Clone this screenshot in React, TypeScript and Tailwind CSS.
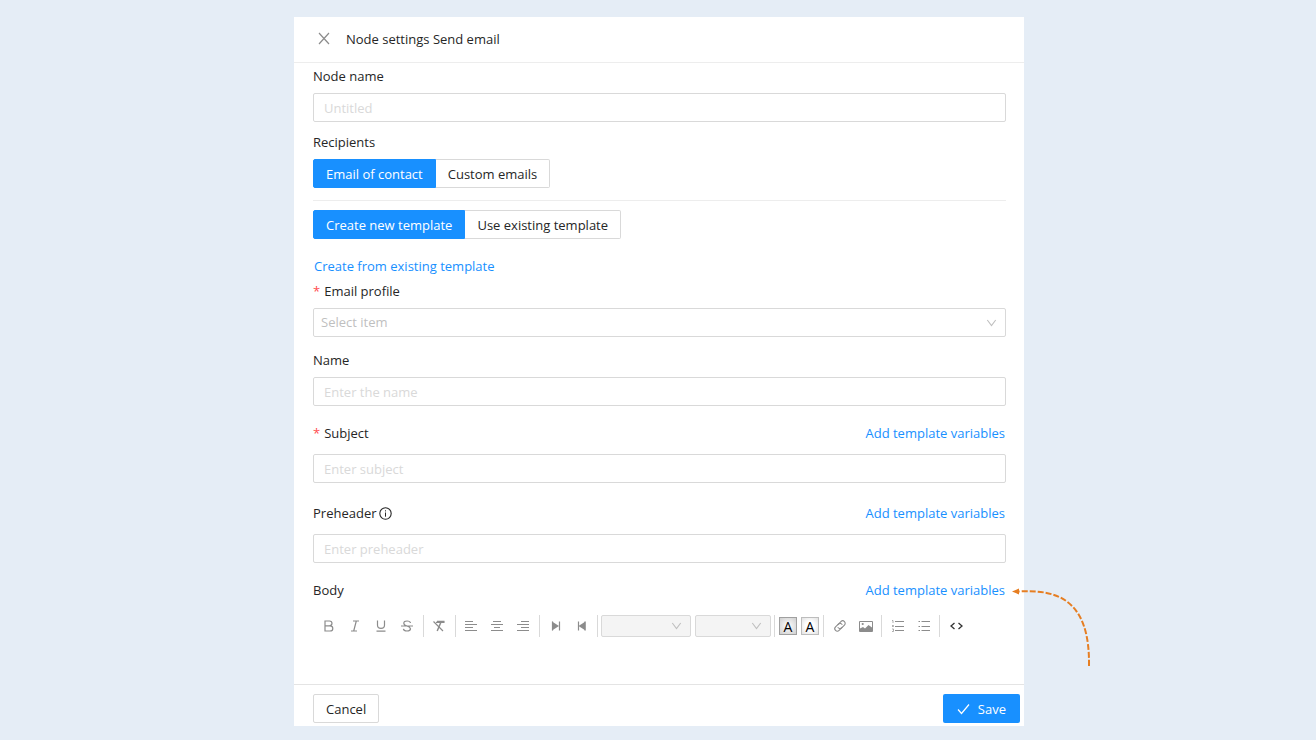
import { useState, type ReactNode } from "react";

function Separator() {
  return <span className="ml-[3px] mr-0.5 h-[22px] w-px bg-[#d9d9d9]" />;
}

function ToolButton({ label, dark, children }: { label: string; dark?: boolean; children: ReactNode }) {
  return (
    <button
      type="button"
      aria-label={label}
      className={`flex h-[22px] w-[26px] items-center justify-center ${dark ? "text-[#333333]" : "text-[#8c8c8c]"}`}
    >
      <svg width="16" height="16" viewBox="0 0 16 16" fill="none" stroke="currentColor" strokeWidth="1.2">
        {children}
      </svg>
    </button>
  );
}

function Chevron() {
  return (
    <svg
      className="pointer-events-none absolute right-[9px] top-1/2 -translate-y-1/2 text-[#bfbfbf]"
      width="11"
      height="10"
      viewBox="0 0 11 10"
      fill="none"
      stroke="currentColor"
      strokeWidth="1.1"
    >
      <path d="M1.3 2L5.5 7.5L9.7 2" />
    </svg>
  );
}

function ColorButton({ label, active }: { label: string; active?: boolean }) {
  return (
    <button
      type="button"
      aria-label={label}
      className={`flex h-[18px] w-[18px] items-center justify-center border pt-0.5 text-sm font-medium leading-none text-black ${
        active
          ? "border-[#a0a0a0] bg-[radial-gradient(circle,#ffffff,#cfcfcf)]"
          : "border-[#bdbdbd] bg-[radial-gradient(circle,#ffffff_40%,#e2e2e2)]"
      }`}
    >
      A
    </button>
  );
}

function Segmented({ name, options }: { name: string; options: string[] }) {
  const [value, setValue] = useState(options[0]);
  return (
    <div role="radiogroup" aria-label={name} className="flex">
      {options.map((option) => (
        <label
          key={option}
          className={`flex h-[29px] cursor-pointer items-center border px-3 pt-px first:rounded-l-xs last:rounded-r-xs ${
            value === option
              ? "border-[#1890ff] bg-[#1890ff] text-white"
              : "border-[#d9d9d9] bg-white first:border-r-0 last:border-l-0"
          }`}
        >
          <input
            type="radio"
            name={name}
            className="sr-only"
            checked={value === option}
            onChange={() => setValue(option)}
          />
          {option}
        </label>
      ))}
    </div>
  );
}

function TextField({ id, placeholder }: { id: string; placeholder: string }) {
  return (
    <input
      id={id}
      type="text"
      placeholder={placeholder}
      className="block h-[29px] w-full rounded-xs border border-[#d9d9d9] px-2.5 outline-none placeholder:text-[#d9d9d9] focus:border-[#1890ff]"
    />
  );
}

function VariablesLink() {
  return (
    <a href="#variables" className="pr-px text-[#1890ff]">
      Add template variables
    </a>
  );
}

function Required() {
  return <span className="mr-1 text-[#ff4d4f]">*</span>;
}

export default function App() {
  return (
    <div className="min-h-screen bg-[#e5edf6] py-[17px] pl-0.5 font-['Open_Sans',sans-serif] text-[13px] leading-5 text-[#262626]">
      <div className="relative mx-auto max-w-[730px] bg-white">
        <header className="flex h-[46px] items-center border-b border-[#ededed] pb-0.5 pl-6">
          <button type="button" aria-label="Close" className="mr-4 text-[#8c8c8c]">
            <svg width="12" height="14" viewBox="0 0 12 14" fill="none" stroke="currentColor" strokeWidth="1.2">
              <path d="M1 1L11 12M11 1L1 12" />
            </svg>
          </button>
          <h1>Node settings Send email</h1>
        </header>

        <main className="pl-[19px] pr-[18px] pt-[3px]">
          <label htmlFor="node" className="mb-[7px] block">
            Node name
          </label>
          <TextField id="node" placeholder="Untitled" />

          <p className="mb-[7px] mt-2.5">Recipients</p>
          <Segmented name="Recipients" options={["Email of contact", "Custom emails"]} />

          <hr className="mb-[9px] mt-3 border-[#ededed]" />
          <Segmented name="Template" options={["Create new template", "Use existing template"]} />

          <a href="#existing" className="mt-[17px] block pl-px text-[#1890ff]">
            Create from existing template
          </a>

          <label htmlFor="profile" className="mb-[7px] mt-[5px] block">
            <Required />
            Email profile
          </label>
          <div className="relative">
            <select
              id="profile"
              className="block h-[29px] w-full appearance-none rounded-xs border border-[#d9d9d9] bg-white px-[7px] pb-0.5 text-[#bfbfbf] outline-none"
            >
              <option>Select item</option>
            </select>
            <Chevron />
          </div>

          <label htmlFor="name" className="mb-[7px] mt-[13px] block">
            Name
          </label>
          <TextField id="name" placeholder="Enter the name" />

          <div className="mb-[11px] mt-[17px] flex justify-between">
            <label htmlFor="subject">
              <Required />
              Subject
            </label>
            <VariablesLink />
          </div>
          <TextField id="subject" placeholder="Enter subject" />

          <div className="mb-[11px] mt-5 flex justify-between">
            <label htmlFor="preheader" className="flex items-center gap-0.5">
              Preheader
              <svg width="13" height="13" viewBox="0 0 13 13" fill="none" stroke="currentColor">
                <circle cx="6.5" cy="6.5" r="5.7" strokeWidth="1.1" />
                <path d="M6.5 5.5V9.7M6.5 3.3V4.4" />
              </svg>
            </label>
            <VariablesLink />
          </div>
          <TextField id="preheader" placeholder="Enter preheader" />

          <div className="mb-[15px] mt-[17px] flex justify-between">
            <label htmlFor="body">Body</label>
            <VariablesLink />
          </div>

          <div className="flex flex-wrap items-center pl-[3px]">
            <ToolButton label="Bold">
              <path d="M4 3H8.5Q11 3 11 5.3T8.5 7.8H4ZM4 7.8H9Q11.8 7.8 11.8 10.4T9 13H4Z" />
            </ToolButton>
            <ToolButton label="Italic">
              <path d="M6 3H12M4 13H10M9.3 3L6.7 13" />
            </ToolButton>
            <ToolButton label="Underline">
              <path d="M4.5 2.5V7.2Q4.5 10.3 8 10.3T11.5 7.2V2.5M3.5 13.2H12.5" />
            </ToolButton>
            <ToolButton label="Strikethrough">
              <path d="M11.5 5Q11.2 3 8 3T4.8 5.2Q4.8 7 8 8T11.5 10.8Q11.2 13 8 13T4.4 10.8M2 8H14" />
            </ToolButton>
            <Separator />
            <ToolButton label="Clear formatting">
              <path d="M2.5 3.5L12 13M5 4.4H13.5" />
              <path d="M6 3.5H13.5M9.8 4.5L6.2 13" strokeWidth="1.5" />
            </ToolButton>
            <Separator />
            <ToolButton label="Align left">
              <path d="M2 3.5H10M2 6.5H14M2 9.5H10M2 12.5H14" strokeWidth="1" />
            </ToolButton>
            <ToolButton label="Align center">
              <path d="M4 3.5H12M2 6.5H14M5 9.5H11M2 12.5H14" strokeWidth="1" />
            </ToolButton>
            <ToolButton label="Align right">
              <path d="M6 3.5H14M2 6.5H14M6 9.5H14M2 12.5H14" strokeWidth="1" />
            </ToolButton>
            <Separator />
            <ToolButton label="Left to right">
              <path d="M5 3.5L12 8L5 12.5Z" fill="currentColor" stroke="none" />
              <path d="M5.5 3.5V12.5M12.5 3.5V12.5" />
            </ToolButton>
            <ToolButton label="Right to left">
              <path d="M12.5 3.5L5.5 8L12.5 12.5Z" fill="currentColor" stroke="none" />
              <path d="M12 3.5V12.5M5.5 3.5V12.5" />
            </ToolButton>
            <Separator />
            <div className="ml-px flex gap-1">
              <div className="relative">
                <select
                  aria-label="Font"
                  className="block h-[22px] w-[90px] appearance-none rounded-xs border border-[#d9d9d9] bg-[#f4f4f4]"
                />
                <Chevron />
              </div>
              <div className="relative">
                <select
                  aria-label="Font size"
                  className="block h-[22px] w-[76px] appearance-none rounded-xs border border-[#d9d9d9] bg-[#f4f4f4]"
                />
                <Chevron />
              </div>
            </div>
            <Separator />
            <div className="ml-0.5 mr-px flex gap-1">
              <ColorButton label="Text color" active />
              <ColorButton label="Background color" />
            </div>
            <Separator />
            <ToolButton label="Link">
              <g transform="translate(1 0) rotate(-45 8 8)" strokeWidth="1.1">
                <path d="M8.8 10.5H4.2A2.5 2.5 0 0 1 4.2 5.5H8.2A2.5 2.5 0 0 1 10.4 8.8" />
                <path d="M7.2 5.5H11.8A2.5 2.5 0 0 1 11.8 10.5H7.8A2.5 2.5 0 0 1 5.6 7.2" />
              </g>
            </ToolButton>
            <ToolButton label="Image">
              <path d="M2.5 3.5H15.5V13.5H2.5Z" strokeWidth="1" />
              <path d="M3 13V10.5L6 9L8 10.5L11.5 7L15 9.5V13Z" fill="currentColor" stroke="none" />
              <circle cx="5.7" cy="6" r="1.1" fill="currentColor" stroke="none" />
            </ToolButton>
            <Separator />
            <ToolButton label="Numbered list">
              <path d="M6 3.5H15M6 8.5H15M6 12.5H15" strokeWidth="1" />
              <path d="M3 2.5H4V5M3 7.5H4.5V8.5H3M3 11H4.5V13.5H3" strokeWidth="0.7" />
            </ToolButton>
            <ToolButton label="Bulleted list">
              <path d="M6.5 3.5H15M6.5 8.5H15M6.5 12.5H15" strokeWidth="1" />
              <path d="M3.5 3.5H5M3.5 8.5H5M3.5 12.5H5" strokeWidth="1.2" />
            </ToolButton>
            <Separator />
            <ToolButton label="Source code" dark>
              <path d="M7.5 5L4 8L7.5 11M11.5 5L15 8L11.5 11" strokeWidth="1.3" />
            </ToolButton>
          </div>
          <textarea id="body" className="block h-[47px] w-full resize-none outline-none" />
        </main>

        <footer className="flex justify-between border-t border-[#e4e4e4] pb-[3px] pl-[19px] pr-1 pt-[9px]">
          <button type="button" className="h-[29px] rounded-xs border border-[#d9d9d9] px-3">
            Cancel
          </button>
          <button type="button" className="flex h-[29px] items-center gap-2 rounded-xs bg-[#1890ff] px-3.5 text-white">
            <svg width="13" height="12" viewBox="0 0 13 12" fill="none" stroke="currentColor" strokeWidth="1.2">
              <path d="M1 6.5L4.5 10.5L12 1.5" />
            </svg>
            Save
          </button>
        </footer>

        {/* pointer to the body variables link */}
        <svg
          className="pointer-events-none absolute -right-[70px] bottom-[56px]"
          width="84"
          height="84"
          viewBox="0 0 84 84"
          fill="none"
          aria-hidden="true"
        >
          <path
            d="M79 80C80 16 50 3 9 5.5"
            stroke="#e67e22"
            strokeWidth="2"
            strokeDasharray="6 2"
          />
          <path d="M2 5.5L9 2.5V8.5Z" fill="#e67e22" />
        </svg>
      </div>
    </div>
  );
}
